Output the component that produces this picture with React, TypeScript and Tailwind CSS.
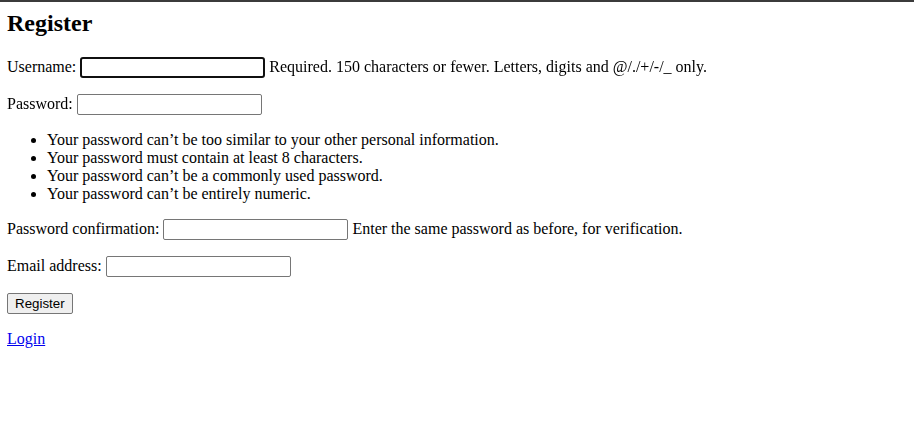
import React from "react";

const inputCls =
  "inline-block h-[21px] w-[185px] rounded-[2px] border border-[#767676] bg-white px-[2px] py-[1px] align-baseline font-['Liberation_Sans',Arial,sans-serif] text-[13.33px] text-black";

/* Plain, browser-default looking registration page */
export default function App() {
  return (
    <div className="min-h-[430px] border-t-2 border-[#3b3b3b] bg-white pl-[7px] pr-2 font-['Liberation_Serif','Times_New_Roman',serif] text-[16px] leading-[normal] text-black">
      <h2 className="mt-[8px] mb-[20px] text-[24px] font-bold leading-[normal]">Register</h2>
      <form onSubmit={(e) => e.preventDefault()}>
        <p className="my-4">
          Username:{" "}
          <input
            type="text"
            autoFocus
            className={inputCls + " focus:border-2 focus:border-[#101010] focus:rounded-[3px] focus:outline-none"}
          />{" "}
          Required. 150 characters or fewer. Letters, digits and @/./+/-/_ only.
        </p>
        <p className="my-4">
          Password: <input type="password" className={inputCls} />
        </p>
        <ul className="my-4 list-disc pl-10">
          <li>Your password can’t be too similar to your other personal information.</li>
          <li>Your password must contain at least 8 characters.</li>
          <li>Your password can’t be a commonly used password.</li>
          <li>Your password can’t be entirely numeric.</li>
        </ul>
        <p className="my-4">
          Password confirmation: <input type="password" className={inputCls} /> Enter the same password as
          before, for verification.
        </p>
        <p className="my-4">
          Email address: <input type="email" className={inputCls} />
        </p>
        <button
          type="submit"
          className="h-[21px] rounded-[2px] border border-[#767676] bg-[#efefef] px-[7px] font-['Liberation_Sans',Arial,sans-serif] text-[13.33px] leading-none text-black"
        >
          Register
        </button>
      </form>
      <p className="my-4">
        <a href="#" className="text-[#0000ee] underline">
          Login
        </a>
      </p>
    </div>
  );
}
